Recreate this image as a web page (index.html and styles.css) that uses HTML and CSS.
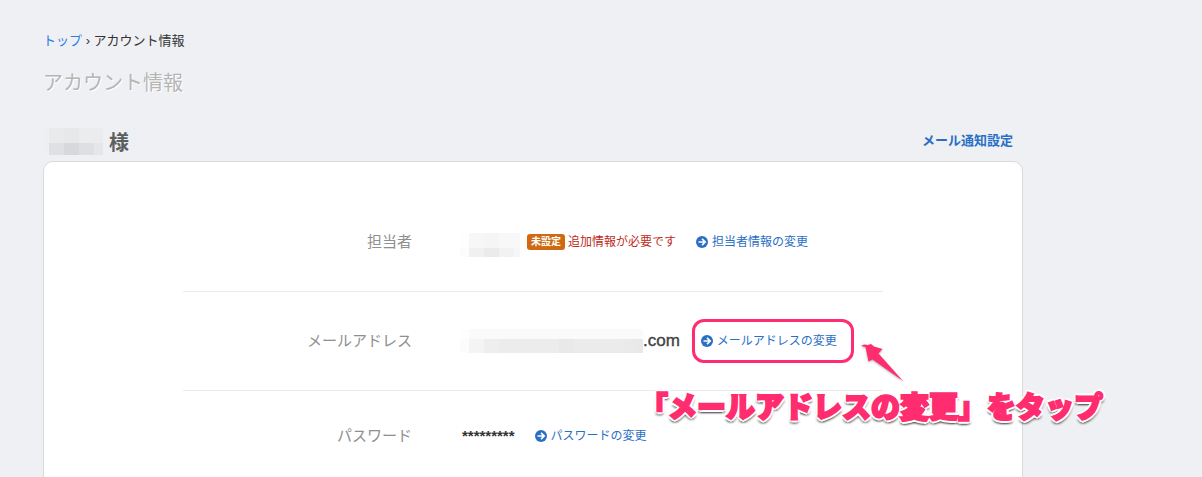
FILE: index.html
```html
<!DOCTYPE html>
<html lang="ja">
<head>
<meta charset="utf-8">
<title>アカウント情報</title>
<link rel="stylesheet" href="styles.css">
</head>
<body>
<svg class="defs" aria-hidden="true">
  <symbol id="go" viewBox="0 0 12 12">
    <circle cx="6" cy="6" r="6" fill="#2a6fc4"/>
    <path d="M2.5 6H9M6 2.8 9.2 6 6 9.2" fill="none" stroke="#fff" stroke-width="1.7"/>
  </symbol>
</svg>
<main class="page">
  <nav class="breadcrumb"><a href="#">トップ</a> › アカウント情報</nav>
  <h1 class="title">アカウント情報</h1>
  <header class="customer">
    <h2 class="customer-name"><span class="mask mask-name"></span>様</h2>
    <a class="notify" href="#">メール通知設定</a>
  </header>
  <section class="card">
    <dl class="rows">
      <div class="row">
        <dt>担当者</dt>
        <dd>
          <span class="mask mask-person"></span>
          <span class="badge">未設定</span>
          <span class="warning">追加情報が必要です</span>
          <a class="change" href="#"><svg class="icon"><use href="#go"/></svg>担当者情報の変更</a>
        </dd>
      </div>
      <div class="row">
        <dt>メールアドレス</dt>
        <dd>
          <span class="mask mask-mail"></span>
          <span class="mail">.com</span>
          <a class="change marked" href="#"><svg class="icon"><use href="#go"/></svg>メールアドレスの変更</a>
        </dd>
      </div>
      <div class="row row-short">
        <dt>パスワード</dt>
        <dd>
          <span class="password">*********</span>
          <a class="change" href="#"><svg class="icon"><use href="#go"/></svg>パスワードの変更</a>
        </dd>
      </div>
    </dl>
  </section>
  <svg class="arrow" viewBox="0 0 50 46" aria-hidden="true">
    <path d="M2 6 5 4.500 9 5 12 4 15 6.500 23.500 9 19.500 13.500 44 41 13.500 19.500 9.500 21.500 6.500 7Z" fill="#ff2d6f"/>
  </svg>
  <p class="callout">「メールアドレスの変更」をタップ</p>
</main>
</body>
</html>
```
FILE: styles.css
```css
* {
  box-sizing: border-box;
}

body {
  margin: 0;
  background: #eff0f4;
  color: #333;
  font-family: "Liberation Sans", "Noto Sans CJK JP", sans-serif;
  font-size: 13px;
  line-height: 20px;
}

a {
  color: #2a6fc4;
  text-decoration: none;
}

.defs {
  display: none;
}

.page {
  position: relative;
  display: flex;
  flex-direction: column;
  height: 100vh;
  overflow: hidden;
  padding: 31px 43px 0;
}

.breadcrumb a {
  color: #2b7de0;
}

.title {
  margin: 17px 0 0;
  color: #b5b5b5;
  font-size: 20px;
  font-weight: 400;
  line-height: 30px;
  text-shadow: 1px 1px 0 #fff;
}

.customer {
  display: flex;
  justify-content: space-between;
  max-width: 980px;
  margin-top: 30px;
  padding-right: 10px;
}

.customer-name {
  display: flex;
  gap: 6px;
  margin: 0;
  color: #5b5f5d;
  font-size: 20px;
  line-height: 30px;
}

.notify {
  padding-top: 3px;
  font-weight: 700;
}

.mask {
  flex: none;
}

.mask-name {
  width: 60px;
  height: 27px;
  background:
    linear-gradient(90deg, #eeeff2 6px, #e9eaec 6px 21px, #e7e8ea 21px 36px, #ebecee 36px) 0 0 / 100% 15px no-repeat,
    linear-gradient(90deg, #eeeff2 6px, #dfe0e2 6px 21px, #d7d8db 21px 36px, #dedfe2 36px 51px, #e5e6e9 51px) 0 15px / 100% 12px no-repeat;
}

.card {
  flex: 1 0 auto;
  width: 100%;
  max-width: 980px;
  margin-top: 3px;
  padding: 31px 139px;
  background: #fff;
  border: 1px solid #d9dadd;
  border-radius: 10px;
}

.rows {
  margin: 0;
}

.row {
  display: grid;
  grid-template-columns: 229px 1fr;
  column-gap: 48px;
  align-items: center;
  padding: 36px 0;
  border-bottom: 1px solid #ebebeb;
}

.row:last-child {
  border-bottom: 0;
}

dt {
  color: #8f8f8f;
  font-size: 15px;
  line-height: 24px;
  text-align: right;
}

dd {
  display: flex;
  align-items: center;
  height: 26px;
  margin: 0;
  white-space: nowrap;
}

.row-short dd {
  height: 18px;
}

.row-short dt {
  line-height: 18px;
}

.mask-person {
  width: 60px;
  height: 24px;
  margin: 6px 7px 0 0;
  background:
    linear-gradient(90deg, #fefefe 9px, #f7f7f7 9px 24px, #f5f5f5 24px 39px, #f8f8f8 39px) 0 0 / 100% 15px no-repeat,
    linear-gradient(90deg, #fcfcfc 9px, #f0f0f0 9px 24px, #ebebeb 24px 39px, #f2f2f2 39px 54px, #f6f6f6 54px) 0 15px / 100% 9px no-repeat;
}

.badge {
  padding: 0 4px;
  background: #cf6a10;
  border-radius: 3px;
  color: #fff;
  font-size: 10px;
  font-weight: 700;
  line-height: 16px;
}

.warning {
  margin-left: 3px;
  color: #bd2a22;
  font-size: 12px;
}

.change {
  display: flex;
  align-items: center;
  gap: 4px;
  margin-left: 20px;
  font-size: 12px;
}

.icon {
  width: 12px;
  height: 12px;
}

.mask-mail {
  width: 183px;
  height: 24px;
  background:
    linear-gradient(90deg, #fefefe 9px, #fafafa 9px) 0 0 / 100% 10px no-repeat,
    linear-gradient(90deg, #fcfcfc 9px, #f4f4f4 9px 24px, #eee 24px 39px, #ececec 39px 99px, #e9e9e9 99px 114px, #ebebeb 114px 160px, #e8e8e8) 0 10px / 100% 14px no-repeat;
}

.mail {
  color: #444;
  font-size: 17px;
  -webkit-text-stroke: 0.4px #444;
}

.marked {
  flex: none;
  height: 44px;
  margin-left: 12px;
  padding: 0 14px 0 6px;
  border: 3px solid #ff2d6f;
  border-radius: 12px;
}

.password {
  padding-left: 2px;
  font-size: 15px;
  font-weight: 700;
  line-height: 18px;
}

.arrow {
  position: absolute;
  top: 340px;
  left: 859px;
  width: 50px;
  height: 46px;
  filter: drop-shadow(0 1px 1px rgba(0, 0, 0, 0.3));
}

.callout {
  position: absolute;
  top: 388px;
  left: 639px;
  margin: 0;
  color: #ff2d6f;
  font-size: 29px;
  font-weight: 900;
  line-height: 40px;
  white-space: nowrap;
  -webkit-text-stroke: 2px #ff2d6f;
  text-shadow:
    3px 0 0 #fff, -3px 0 0 #fff, 0 3px 0 #fff, 0 -3px 0 #fff,
    2px 2px 0 #fff, -2px 2px 0 #fff, 2px -2px 0 #fff, -2px -2px 0 #fff,
    0 4px 2px rgba(0, 0, 0, 0.4), 2px 4px 2px rgba(0, 0, 0, 0.3), -2px 4px 2px rgba(0, 0, 0, 0.3);
}
```
